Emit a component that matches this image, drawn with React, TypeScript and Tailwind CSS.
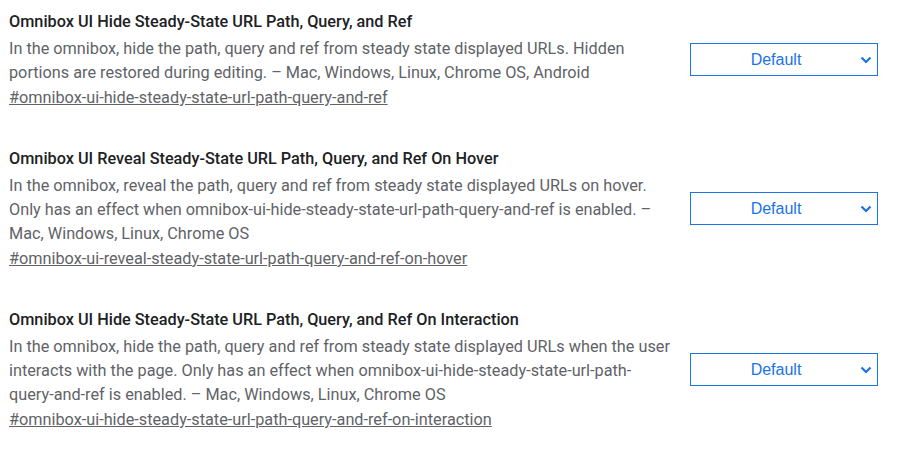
const flags = [
  {
    name: "Omnibox UI Hide Steady-State URL Path, Query, and Ref",
    desc: "In the omnibox, hide the path, query and ref from steady state displayed URLs. Hidden portions are restored during editing. – Mac, Windows, Linux, Chrome OS, Android",
    anchor: "#omnibox-ui-hide-steady-state-url-path-query-and-ref",
  },
  {
    name: "Omnibox UI Reveal Steady-State URL Path, Query, and Ref On Hover",
    desc: "In the omnibox, reveal the path, query and ref from steady state displayed URLs on hover. Only has an effect when omnibox-ui-hide-steady-state-url-path-query-and-ref is enabled. – Mac, Windows, Linux, Chrome OS",
    anchor: "#omnibox-ui-reveal-steady-state-url-path-query-and-ref-on-hover",
  },
  {
    name: "Omnibox UI Hide Steady-State URL Path, Query, and Ref On Interaction",
    desc: "In the omnibox, hide the path, query and ref from steady state displayed URLs when the user interacts with the page. Only has an effect when omnibox-ui-hide-steady-state-url-path-query-and-ref is enabled. – Mac, Windows, Linux, Chrome OS",
    anchor: "#omnibox-ui-hide-steady-state-url-path-query-and-ref-on-interaction",
  },
];

export default function App() {
  return (
    <div className="w-[905px] h-[451px] bg-white pt-[12px] pl-[9px] font-['Roboto',sans-serif] overflow-hidden">
      <div className="flex flex-col gap-[39px]">
        {flags.map((f) => (
          <div key={f.anchor} className="flex items-center">
            <div className="w-[664px]">
              <h3 className="text-[16.25px] leading-[20px] font-medium text-[#202124]">{f.name}</h3>
              <p className="mt-[5px] text-[16.25px] leading-[24px] text-[#5f6368]">{f.desc}</p>
              <a href={f.anchor} className="block mt-[1px] text-[16.25px] leading-[24px] text-[#5f6368] underline">
                {f.anchor}
              </a>
            </div>
            <div className="ml-[17px] mb-[3px] relative w-[188px] h-[33px] border-[1.5px] border-[#1a73e8] flex items-center justify-center pr-[16px]">
              <span className="text-[16px] text-[#1a73e8] font-['Liberation_Sans',sans-serif]">Default</span>
              <svg className="absolute right-[5px] top-1/2 -translate-y-1/2" width="12" height="8" viewBox="0 0 12 8">
                <path d="M1.5 1.5 L6 6 L10.5 1.5" fill="none" stroke="#1a73e8" strokeWidth="2.2" />
              </svg>
            </div>
          </div>
        ))}
      </div>
    </div>
  );
}
